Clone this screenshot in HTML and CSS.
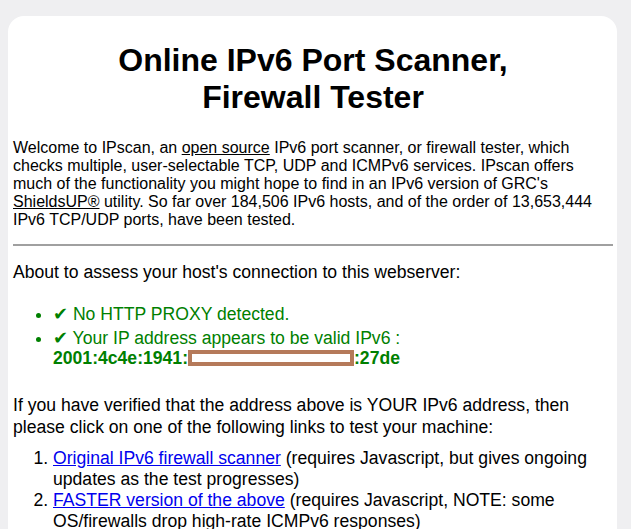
FILE: index.html
```html
<!DOCTYPE html>
<html lang="en">
<head>
  <meta charset="UTF-8" />
  <meta name="viewport" content="width=device-width, initial-scale=1.0"/>
  <title>IPscan - Online IPv6 Port Scanner</title>
  <link rel="stylesheet" href="styles.css">
</head>
<body>
  <div class="card">
    <h1>Online IPv6 Port Scanner,<br>Firewall Tester</h1>
    <p class="intro">Welcome to IPscan, an <a href="#" class="plain">open source</a> IPv6 port scanner, or firewall tester, which checks multiple, user-selectable TCP, UDP and ICMPv6 services. IPscan offers much of the functionality you might hope to find in an IPv6 version of GRC's <a href="#" class="plain">ShieldsUP&reg;</a> utility. So far over 184,506 IPv6 hosts, and of the order of 13,653,444 IPv6 TCP/UDP ports, have been tested.</p>
    <hr>
    <div class="main">
      <p class="assess">About to assess your host's connection to this webserver:</p>
      <ul class="checks">
        <li>&#10004; No HTTP PROXY detected.</li>
        <li>&#10004; Your IP address appears to be valid IPv6 :<br><b>2001:4c4e:1941:<span class="redact"></span>:27de</b></li>
      </ul>
      <p class="verify">If you have verified that the address above is YOUR IPv6 address, then please click on one of the following links to test your machine:</p>
      <ol class="tests">
        <li><a href="#">Original IPv6 firewall scanner</a> (requires Javascript, but gives ongoing updates as the test progresses)</li>
        <li><a href="#">FASTER version of the above</a> (requires Javascript, NOTE: some OS/firewalls drop high-rate ICMPv6 responses)</li>
        <li><a href="#">Javascript-free scanner</a> (no progress updates, results shown at the end)</li>
      </ol>
    </div>
  </div>
</body>
</html>
```
FILE: styles.css
```css
body {
  font-family: "Liberation Sans", Arial, sans-serif;
  background: #efeff1;
  color: #000;
  margin: 0;
  overflow: hidden;
}

.card {
  background: white;
  margin: 16px 14px 0 8px;
  padding: 5px 4px 40px 5px;
  border-radius: 16px 16px 0 0;
}

h1 {
  font-size: 32px;
  text-align: center;
  line-height: 37px;
  margin: 21px 0 23px;
}

.intro {
  font-size: 16px;
  line-height: 18px;
  margin: 0;
}

a {
  color: #0000ee;
}

a.plain {
  color: #000;
}

hr {
  border: none;
  border-top: 2px solid #a0a0a0;
  margin: 15px 0 0;
}

.main {
  font-size: 17.6px;
  line-height: 22px;
}

.main p {
  margin: 0;
}

.assess {
  padding-top: 15px;
}

.checks {
  color: #008000;
  line-height: 20px;
  padding-left: 40px;
  margin: 21px 0 26px;
}

.checks li {
  margin-bottom: 4px;
}

.redact {
  display: inline-block;
  width: 158px;
  height: 8px;
  border: 4px solid #b57a5a;
  background: white;
  vertical-align: -2px;
}

.tests {
  line-height: 21px;
  padding-left: 40px;
  margin: 10px 0 0;
}
```
